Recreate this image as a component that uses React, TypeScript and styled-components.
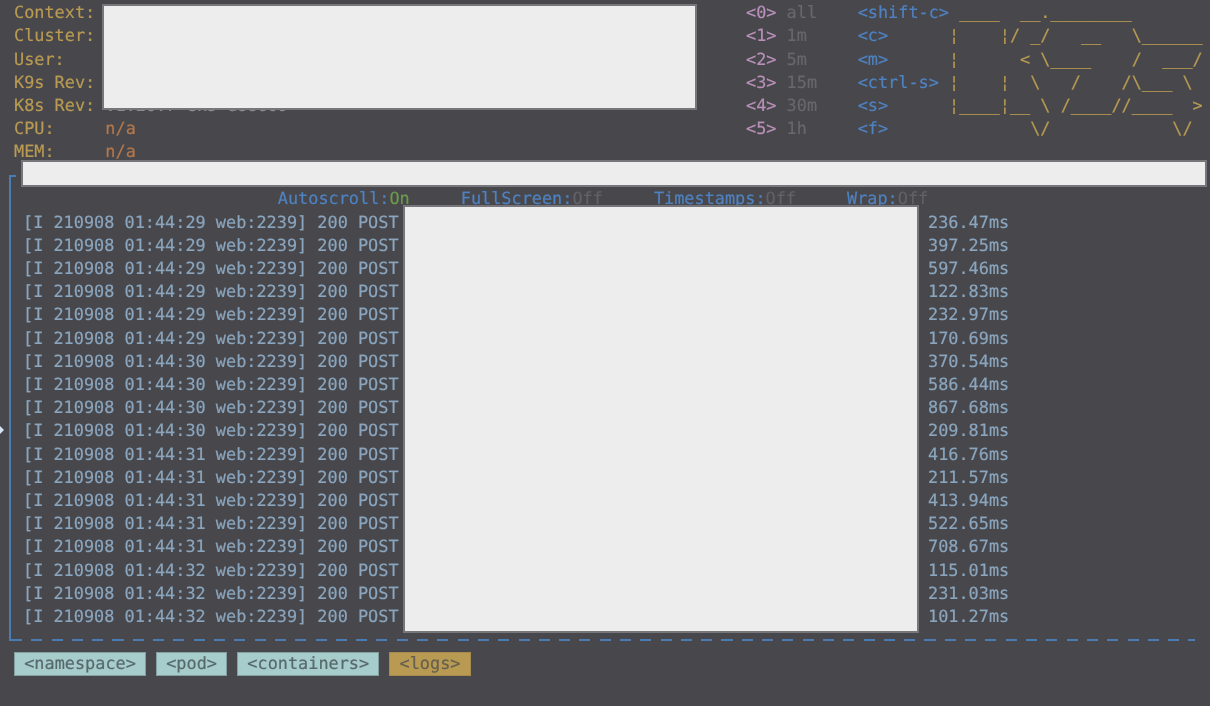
import React from 'react';
import styled, { createGlobalStyle } from 'styled-components';

const GlobalStyle = createGlobalStyle`
  html, body {
    margin: 0;
    padding: 0;
    background: #47474c;
  }
`;

const info = [
  ['Context:', ''],
  ['Cluster:', ''],
  ['User:', ''],
  ['K9s Rev:', ''],
  ['K8s Rev:', 'v1.20.7-eks-d88609'],
  ['CPU:', 'n/a'],
  ['MEM:', 'n/a'],
];

const ranges = [
  ['<0>', 'all', '<shift-c>'],
  ['<1>', '1m', '<c>'],
  ['<2>', '5m', '<m>'],
  ['<3>', '15m', '<ctrl-s>'],
  ['<4>', '30m', '<s>'],
  ['<5>', '1h', '<f>'],
];

const logo = [
  ' ____  __.________',
  '¦    ¦/ _/   __   \\______',
  '¦      < \\____    /  ___/',
  '¦    ¦  \\   /    /\\___ \\',
  '¦____¦__ \\ /____//____  >',
  '        \\/            \\/',
];

const logs = [
  ['29', '236.47ms'],
  ['29', '397.25ms'],
  ['29', '597.46ms'],
  ['29', '122.83ms'],
  ['29', '232.97ms'],
  ['29', '170.69ms'],
  ['30', '370.54ms'],
  ['30', '586.44ms'],
  ['30', '867.68ms'],
  ['30', '209.81ms'],
  ['31', '416.76ms'],
  ['31', '211.57ms'],
  ['31', '413.94ms'],
  ['31', '522.65ms'],
  ['31', '708.67ms'],
  ['32', '115.01ms'],
  ['32', '231.03ms'],
  ['32', '101.27ms'],
];

const toggles = [
  ['Autoscroll:', 'On'],
  ['FullScreen:', 'Off'],
  ['Timestamps:', 'Off'],
  ['Wrap:', 'Off'],
];

const crumbs = ['<namespace>', '<pod>', '<containers>', '<logs>'];

export default function App() {
  return (
    <Screen>
      <GlobalStyle />
      <Header>
        <InfoColumn>
          {info.map(([label, value]) => (
            <InfoRow key={label}>
              <InfoLabel>{label}</InfoLabel>
              <InfoValue $metric={value === 'n/a'}>{value}</InfoValue>
            </InfoRow>
          ))}
        </InfoColumn>
        <Shortcuts>
          {ranges.map(([key, label, action]) => (
            <ShortcutRow key={key}>
              <RangeKey>{key}</RangeKey>
              <RangeLabel>{label}</RangeLabel>
              <ActionKey>{action}</ActionKey>
            </ShortcutRow>
          ))}
        </Shortcuts>
        <Logo>{logo.join('\n')}</Logo>
      </Header>

      <LogFrame>
        <CornerTick />
        <SelectionMark />
        <TitleRow>
          {toggles.map(([label, state]) => (
            <span key={label}>
              <ToggleLabel>{label}</ToggleLabel>
              <ToggleState $on={state === 'On'}>{state}</ToggleState>
            </span>
          ))}
        </TitleRow>
        {logs.map(([second, duration], i) => (
          <LogRow key={i}>
            <span>{`[I 210908 01:44:${second} web:2239] 200 POST`}</span>
            <span>{duration}</span>
          </LogRow>
        ))}
      </LogFrame>

      <Crumbs>
        {crumbs.map((crumb) => (
          <Crumb key={crumb} $active={crumb === '<logs>'}>
            {crumb}
          </Crumb>
        ))}
      </Crumbs>

      <HeaderMask />
      <TitleMask />
      <LogMask />
    </Screen>
  );
}

const Screen = styled.div`
  position: relative;
  box-sizing: border-box;
  width: 1210px;
  height: 706px;
  padding-top: 1.2px;
  overflow: hidden;
  background: #47474c;
  color: #8aa5bd;
  font-family: 'DejaVu Sans Mono', 'Liberation Mono', monospace;
  font-size: 16.88px;
  line-height: 23.2px;
  white-space: pre;
  text-rendering: geometricPrecision;
  -webkit-text-stroke: 0.2px;
  filter: blur(0.45px);
`;

const Header = styled.header`
  display: flex;
  height: 162.4px;
  padding-left: 14px;
`;

const InfoColumn = styled.div`
  width: 732px;
`;

const InfoRow = styled.div`
  display: flex;
`;

const InfoLabel = styled.span`
  width: 9ch;
  color: #b89a52;
`;

const InfoValue = styled.span<{ $metric: boolean }>`
  color: ${(p) => (p.$metric ? '#b5784a' : '#8d8d90')};
`;

const Shortcuts = styled.div`
  width: 20ch;
  flex-shrink: 0;
`;

const ShortcutRow = styled.div`
  display: grid;
  grid-template-columns: 4ch 7ch auto;
`;

const RangeKey = styled.span`
  color: #b990b8;
`;

const RangeLabel = styled.span`
  color: #68686c;
`;

const ActionKey = styled.span`
  color: #4f82c0;
`;

const Logo = styled.pre`
  margin: 0;
  font: inherit;
  color: #b89a52;
`;

const LogFrame = styled.section`
  position: relative;
  margin: 11px 15px 0 9px;
  padding: 0.4px 0 13.2px 12px;
  border-left: 2px solid #4a7cb4;
  background: repeating-linear-gradient(90deg, #4a7cb4 0 11px, transparent 11px 20.3px) bottom / 100% 2px no-repeat;
`;

const CornerTick = styled.i`
  display: block;
  width: 5px;
  height: 2px;
  margin: 0 0 10px -12px;
  background: #4a7cb4;
`;

const SelectionMark = styled.i`
  position: absolute;
  left: -11px;
  top: 251px;
  border-left: 4px solid #d5e4f7;
  border-top: 4px solid transparent;
  border-bottom: 4px solid transparent;
`;

const TitleRow = styled.div`
  display: flex;
  justify-content: center;
  gap: 51px;
  margin: 0 0 0.4px -12px;
  font-weight: 500;
`;

const ToggleLabel = styled.span`
  color: #4f82c0;
`;

const ToggleState = styled.span<{ $on: boolean }>`
  color: ${(p) => (p.$on ? '#6c9a4c' : '#626266')};
`;

const LogRow = styled.div`
  display: grid;
  grid-template-columns: 905px auto;
`;

const Crumbs = styled.nav`
  display: flex;
  gap: 10px;
  margin: 10.4px 0 0 14px;
`;

const Crumb = styled.span<{ $active: boolean }>`
  box-sizing: border-box;
  height: 24px;
  padding: 0 9.2px;
  border: 1px solid ${(p) => (p.$active ? '#a58b4c' : '#839f9f')};
  background: ${(p) => (p.$active ? '#b89a52' : '#a6cccc')};
  color: ${(p) => (p.$active ? '#66604f' : '#58696c')};
  line-height: 21px;
`;

const Mask = styled.div`
  position: absolute;
  box-sizing: border-box;
  border: 2px solid #77777b;
  background: #ededed;
`;

const HeaderMask = styled(Mask)`
  left: 102px;
  top: 4px;
  width: 595px;
  height: 106px;
`;

const TitleMask = styled(Mask)`
  left: 21px;
  top: 160px;
  width: 1186px;
  height: 27px;
`;

const LogMask = styled(Mask)`
  left: 403px;
  top: 205px;
  width: 516px;
  height: 428px;
`;
